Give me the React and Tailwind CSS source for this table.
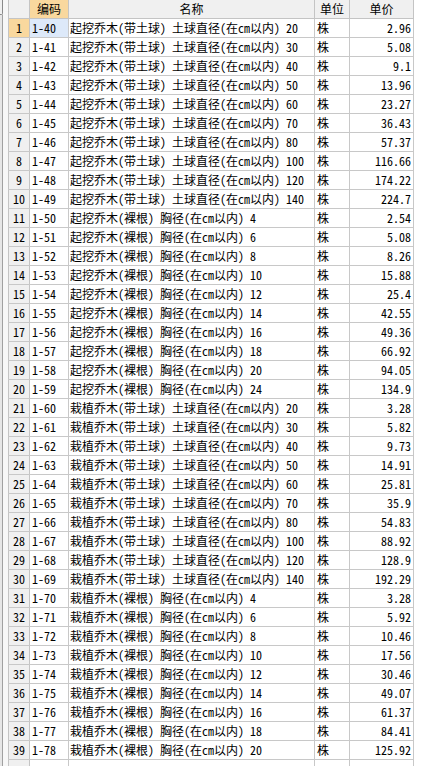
import React from "react";

const rows = [
  ["1-40", "起挖乔木(带土球) 土球直径(在cm以内) 20", "2.96"],
  ["1-41", "起挖乔木(带土球) 土球直径(在cm以内) 30", "5.08"],
  ["1-42", "起挖乔木(带土球) 土球直径(在cm以内) 40", "9.1"],
  ["1-43", "起挖乔木(带土球) 土球直径(在cm以内) 50", "13.96"],
  ["1-44", "起挖乔木(带土球) 土球直径(在cm以内) 60", "23.27"],
  ["1-45", "起挖乔木(带土球) 土球直径(在cm以内) 70", "36.43"],
  ["1-46", "起挖乔木(带土球) 土球直径(在cm以内) 80", "57.37"],
  ["1-47", "起挖乔木(带土球) 土球直径(在cm以内) 100", "116.66"],
  ["1-48", "起挖乔木(带土球) 土球直径(在cm以内) 120", "174.22"],
  ["1-49", "起挖乔木(带土球) 土球直径(在cm以内) 140", "224.7"],
  ["1-50", "起挖乔木(裸根) 胸径(在cm以内) 4", "2.54"],
  ["1-51", "起挖乔木(裸根) 胸径(在cm以内) 6", "5.08"],
  ["1-52", "起挖乔木(裸根) 胸径(在cm以内) 8", "8.26"],
  ["1-53", "起挖乔木(裸根) 胸径(在cm以内) 10", "15.88"],
  ["1-54", "起挖乔木(裸根) 胸径(在cm以内) 12", "25.4"],
  ["1-55", "起挖乔木(裸根) 胸径(在cm以内) 14", "42.55"],
  ["1-56", "起挖乔木(裸根) 胸径(在cm以内) 16", "49.36"],
  ["1-57", "起挖乔木(裸根) 胸径(在cm以内) 18", "66.92"],
  ["1-58", "起挖乔木(裸根) 胸径(在cm以内) 20", "94.05"],
  ["1-59", "起挖乔木(裸根) 胸径(在cm以内) 24", "134.9"],
  ["1-60", "栽植乔木(带土球) 土球直径(在cm以内) 20", "3.28"],
  ["1-61", "栽植乔木(带土球) 土球直径(在cm以内) 30", "5.82"],
  ["1-62", "栽植乔木(带土球) 土球直径(在cm以内) 40", "9.73"],
  ["1-63", "栽植乔木(带土球) 土球直径(在cm以内) 50", "14.91"],
  ["1-64", "栽植乔木(带土球) 土球直径(在cm以内) 60", "25.81"],
  ["1-65", "栽植乔木(带土球) 土球直径(在cm以内) 70", "35.9"],
  ["1-66", "栽植乔木(带土球) 土球直径(在cm以内) 80", "54.83"],
  ["1-67", "栽植乔木(带土球) 土球直径(在cm以内) 100", "88.92"],
  ["1-68", "栽植乔木(带土球) 土球直径(在cm以内) 120", "128.9"],
  ["1-69", "栽植乔木(带土球) 土球直径(在cm以内) 140", "192.29"],
  ["1-70", "栽植乔木(裸根) 胸径(在cm以内) 4", "3.28"],
  ["1-71", "栽植乔木(裸根) 胸径(在cm以内) 6", "5.92"],
  ["1-72", "栽植乔木(裸根) 胸径(在cm以内) 8", "10.46"],
  ["1-73", "栽植乔木(裸根) 胸径(在cm以内) 10", "17.56"],
  ["1-74", "栽植乔木(裸根) 胸径(在cm以内) 12", "30.46"],
  ["1-75", "栽植乔木(裸根) 胸径(在cm以内) 14", "49.07"],
  ["1-76", "栽植乔木(裸根) 胸径(在cm以内) 16", "61.37"],
  ["1-77", "栽植乔木(裸根) 胸径(在cm以内) 18", "84.41"],
  ["1-78", "栽植乔木(裸根) 胸径(在cm以内) 20", "125.92"],
];

export default function App() {
  return (
    <div className="flex w-[429px] h-[766px] overflow-hidden bg-white text-black text-[12px] leading-[18px] font-['Noto_Sans_Mono_CJK_SC','Noto_Sans_CJK_SC',monospace]">
      {/* left frame strip */}
      <div className="flex w-[8px] shrink-0">
        <div className="flex flex-col w-[3px]">
          <div className="h-[15px] bg-[#f0f0f0] border-r border-b border-[#8a8a8a] rounded-br-[2px]" />
          <div className="flex-1 bg-[#e6e6e6] border-r border-[#a0a0a0]" />
        </div>
        <div className="w-[5px] bg-[#f7f7f7]" />
      </div>

      {/* grid */}
      <div className="flex flex-col w-[406px] shrink-0">
        {/* header */}
        <div className="flex h-[19px] shrink-0 border-b border-[#c4c4c4] bg-[#f0f0f0]">
          <div className="w-[22px] border-l border-r border-[#c4c4c4]" />
          <div className="w-[39px] border-r border-[#c4c4c4] bg-[#f9d89e] text-center">编码</div>
          <div className="w-[246px] border-r border-[#c4c4c4] text-center">名称</div>
          <div className="w-[35px] border-r border-[#c4c4c4] text-center">单位</div>
          <div className="w-[64px] border-r border-[#c4c4c4] text-center">单价</div>
        </div>
        {rows.map((r, i) => (
          <div key={i} className="flex h-[19px] shrink-0 border-b border-[#c8c8c8]">
            <div
              className={
                "w-[22px] border-l border-r border-[#c4c4c4] text-center " +
                (i === 0 ? "bg-[#f9d89e]" : "bg-[#f0f0f0]")
              }
            >
              {i + 1}
            </div>
            <div
              className={
                "w-[39px] border-r border-[#c8c8c8] pl-[2px] whitespace-nowrap " +
                (i === 0 ? "bg-[#dde9f9]" : "")
              }
            >
              {r[0]}
            </div>
            <div className="w-[246px] border-r border-[#c8c8c8] pl-[1px] whitespace-pre overflow-hidden">
              {r[1]}
            </div>
            <div className="w-[35px] border-r border-[#c8c8c8] pl-[2px]">株</div>
            <div className="w-[64px] border-r border-[#c8c8c8] pr-[2px] text-right">{r[2]}</div>
          </div>
        ))}
        <div className="flex h-[19px] shrink-0">
          <div className="w-[22px] border-l border-r border-[#c4c4c4] bg-[#f0f0f0]" />
          <div className="w-[39px] border-r border-[#c8c8c8]" />
          <div className="w-[246px] border-r border-[#c8c8c8]" />
          <div className="w-[35px] border-r border-[#c8c8c8]" />
          <div className="w-[64px] border-r border-[#c8c8c8]" />
        </div>
      </div>
      <div className="flex-1 bg-white" />
    </div>
  );
}
